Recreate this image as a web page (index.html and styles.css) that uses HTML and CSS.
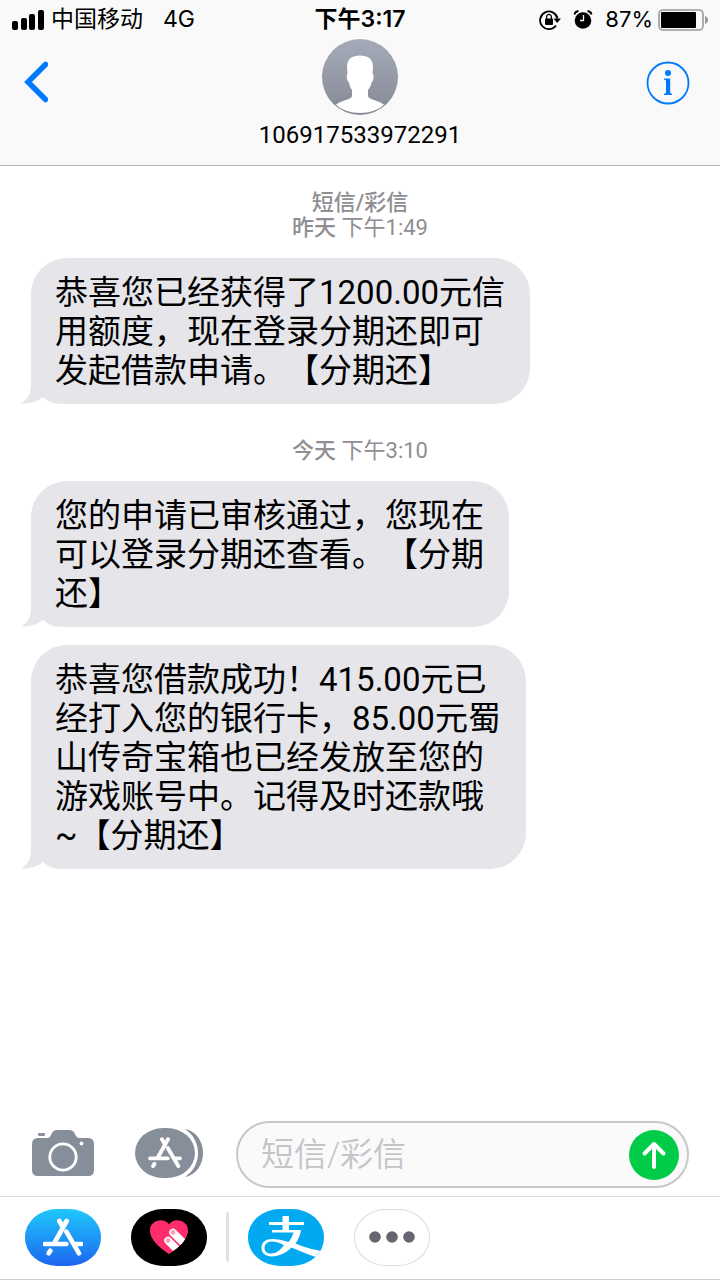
FILE: index.html
```html
<!DOCTYPE html>
<html lang="zh-CN">
  <head>
    <meta charset="UTF-8" />
    <meta name="viewport" content="width=device-width, initial-scale=1.0" />
    <title>短信</title>
    <link rel="stylesheet" href="styles.css">
  </head>
  <body>
    <svg class="defs" aria-hidden="true">
      <symbol id="tail" viewBox="0 0 40 36">
        <path d="M10 0V16C10 26 7 31 0 35.500C9 36 17 33 22 29C28 34 34 36 40 36V0Z" />
      </symbol>
      <symbol id="appstore" viewBox="0 0 120 112">
        <path d="M71 8L33 76M22 97L17 105M49 8L58 24M70 40L108 105M6 77H70M92 77H114" fill="none" stroke="#fff" stroke-width="14" stroke-linecap="round" />
      </symbol>
    </svg>

    <header class="header">
      <div class="status">
        <div class="status-left">
          <svg class="signal" width="32" height="20" viewBox="0 0 32 20">
            <rect x="0" y="11" width="6" height="9" rx="2" />
            <rect x="9" y="8" width="6" height="12" rx="2" />
            <rect x="17" y="4" width="6" height="16" rx="2" />
            <rect x="26" y="0" width="6" height="20" rx="2" />
          </svg>
          <span>中国移动</span>
          <span class="network">4G</span>
        </div>
        <div class="status-time">下午3:17</div>
        <div class="status-right">
          <svg class="rotation" width="22" height="20" viewBox="0 0 22 20">
            <path d="M17 15.500A8.800 8.800 0 1 1 18.500 8.500" fill="none" stroke="#000" stroke-width="1.800" />
            <path d="M14.500 8.500H22L18.200 13Z" />
            <rect x="6" y="8.500" width="8" height="6.500" rx="1" />
            <path d="M7.600 9V6.800A2.400 2.400 0 0 1 12.400 6.800V9" fill="none" stroke="#000" stroke-width="1.300" />
          </svg>
          <svg class="alarm" width="20" height="20" viewBox="0 0 20 20">
            <circle cx="10" cy="10.500" r="8.300" />
            <path d="M1.500 4.500Q2 1.500 5.500 1M18.500 4.500Q18 1.500 14.500 1" fill="none" stroke="#000" stroke-width="1.800" />
            <path d="M10.500 5V10.500H7" fill="none" stroke="#f9f9f9" stroke-width="1.300" />
          </svg>
          <span>87%</span>
          <svg class="battery" width="50" height="22" viewBox="0 0 50 22">
            <rect x="1" y="1" width="44" height="20" rx="4" fill="none" stroke="#999" stroke-width="1.600" />
            <rect x="3" y="3" width="35" height="16" rx="1" />
            <path d="M47 7Q50 8 50 11T47 15Z" fill="#999" />
          </svg>
        </div>
      </div>
      <div class="nav">
        <button type="button" class="back" aria-label="返回">
          <svg width="24" height="42" viewBox="0 0 24 42">
            <path d="M21.500 3.500L4 21L21.500 38.500" fill="none" stroke="#007aff" stroke-width="5.500" stroke-linecap="round" stroke-linejoin="miter" />
          </svg>
        </button>
        <div class="contact">
          <svg width="76" height="76" viewBox="0 0 76 76">
            <defs>
              <linearGradient id="avatar" x1="0" y1="0" x2="0" y2="1">
                <stop offset="0" stop-color="#a5abb9" />
                <stop offset="1" stop-color="#858994" />
              </linearGradient>
            </defs>
            <circle cx="38" cy="38" r="38" fill="url(#avatar)" />
            <path d="M38 16.500C46 16.500 51 20 51 28L50.500 35C52.500 36 51.500 42 49.500 43.500C49 47 47.500 49 46 51V57C46 60.500 57 61.500 62 65.500C57 71 47 74 38 74S19 71 14 65.500C19 61.500 30 60.500 30 57V51C28.500 49 27.500 47 27 43.500C25 42 24 36 25.500 35L25 28C25 20 30 16.500 38 16.500Z" fill="#fff" />
          </svg>
          <h1>106917533972291</h1>
        </div>
        <button type="button" class="info" aria-label="详细信息">
          <svg width="44" height="44" viewBox="0 0 44 44">
            <circle cx="22" cy="22" r="20.500" fill="none" stroke="#007aff" stroke-width="1.800" />
            <circle cx="22" cy="12" r="3" fill="#007aff" />
            <path d="M18 17.500H24.200V32L26 33V34H18V33L20 32V19.500L18 18.500Z" fill="#007aff" />
          </svg>
        </button>
      </div>
    </header>

    <main class="messages">
      <p class="stamp"><b>短信/彩信</b><br><b>昨天</b> 下午1:49</p>
      <div class="bubble">
        恭喜您已经获得了1200.00元信<br>用额度，现在登录分期还即可<br>发起借款申请。【分期还】
        <svg class="tail"><use href="#tail" /></svg>
      </div>

      <p class="stamp later"><b>今天</b> 下午3:10</p>
      <div class="bubble">
        您的申请已审核通过，您现在<br>可以登录分期还查看。【分期<br>还】
        <svg class="tail"><use href="#tail" /></svg>
      </div>
      <div class="bubble">
        恭喜您借款成功！415.00元已<br>经打入您的银行卡，85.00元蜀<br>山传奇宝箱也已经发放至您的<br>游戏账号中。记得及时还款哦<br>~【分期还】
        <svg class="tail"><use href="#tail" /></svg>
      </div>
    </main>

    <form class="compose">
      <button type="button" class="tool" aria-label="相机">
        <svg width="62" height="46" viewBox="0 0 62 46">
          <path d="M6 8H16Q18 8 19 5L20 3Q21.500 0 25 0H37Q41 0 42.500 3L44 6Q45 8 47 8H56Q62 8 62 14V40Q62 46 56 46H6Q0 46 0 40V14Q0 8 6 8Z" fill="#868e99" />
          <rect x="6" y="3" width="7" height="3" rx="1" fill="#868e99" />
          <circle cx="31" cy="27" r="13.200" fill="none" stroke="#fff" stroke-width="2.800" />
          <circle cx="49.500" cy="13.500" r="1.900" fill="#fff" />
        </svg>
      </button>
      <button type="button" class="tool apps-toggle" aria-label="应用">
        <svg width="68" height="50" viewBox="0 0 68 50">
          <path d="M50 1C61 3 68 13 68 25S61 47 50 49C59 43 63 34 63 25S59 7 50 1Z" fill="#868e99" />
          <rect x="0" y="0" width="60" height="50" rx="28" ry="25" fill="#868e99" />
          <use href="#appstore" x="13" y="9" width="34" height="31" />
        </svg>
      </button>
      <div class="field">
        <input type="text" placeholder="短信/彩信" aria-label="短信/彩信" />
        <button type="submit" class="send" aria-label="发送">
          <svg width="50" height="50" viewBox="0 0 50 50">
            <circle cx="25" cy="25" r="25" fill="#00cc47" />
            <path d="M25 37V14M15.500 23.500L25 14L34.500 23.500" fill="none" stroke="#fff" stroke-width="4" stroke-linecap="round" stroke-linejoin="round" />
          </svg>
        </button>
      </div>
    </form>

    <nav class="drawer">
      <button type="button" class="app app-store" aria-label="App Store">
        <svg width="40" height="38"><use href="#appstore" /></svg>
      </button>
      <button type="button" class="app digital-touch" aria-label="Digital Touch">
        <svg width="40" height="36" viewBox="0 0 40 36">
          <clipPath id="heart">
            <path d="M20 35C14 31 1 22 1 11.500C1 1 15 -2 20 5.500C25 -2 39 1 39 11.500C39 22 26 31 20 35Z" />
          </clipPath>
          <path d="M20 35C14 31 1 22 1 11.500C1 1 15 -2 20 5.500C25 -2 39 1 39 11.500C39 22 26 31 20 35Z" fill="#ff2d6b" />
          <path d="M19 21.500L27 29.500M24 13.500L34 23.500" clip-path="url(#heart)" stroke="#fff" stroke-width="7.500" stroke-linecap="round" />
          <circle cx="19" cy="21.500" r="2.400" fill="#ff9db8" />
          <circle cx="24" cy="13.500" r="2.400" fill="#ff9db8" />
        </svg>
      </button>
      <span class="divider"></span>
      <button type="button" class="app alipay" aria-label="支付宝">
        <svg width="76" height="57" viewBox="0 0 76 57">
          <path d="M34.500 7H41V13H56V16H41V21H53C52 27 50 31 47.500 34.500C54 37.500 64 40.500 73 42L68 48C60 45.500 51 41.500 43.500 38.500C38 44 31 47.500 24 47.500C17 47.500 13.500 43.500 13.500 39C13.500 33 18 30 24 30C29.500 30 34 31 40.500 33C43 30 44.500 27 45.500 23.500H24V21H34.500V16H21V13H34.500ZM36 36C31 33.500 27 32.500 23.500 32.500C19 32.500 16.500 35.500 16.500 39C16.500 42.500 19 44.500 23 44.500C28 44.500 32.500 41 36 36Z" fill="#fff" fill-rule="evenodd" />
        </svg>
      </button>
      <button type="button" class="app more" aria-label="更多">
        <svg width="46" height="12" viewBox="0 0 46 12">
          <circle cx="6" cy="6" r="5.800" />
          <circle cx="23" cy="6" r="5.800" />
          <circle cx="40" cy="6" r="5.800" />
        </svg>
      </button>
    </nav>
  </body>
</html>
```

FILE: styles.css
```css
* {
  box-sizing: border-box;
}

body {
  margin: 0;
  min-height: 100vh;
  display: flex;
  flex-direction: column;
  background: #fff;
  color: #000;
  font-family: Roboto, "Noto Sans CJK SC", sans-serif;
  text-spacing-trim: space-all;
}

button {
  display: flex;
  padding: 0;
  border: none;
  background: none;
  cursor: pointer;
}

svg {
  display: block;
}

.defs {
  position: absolute;
  width: 0;
  height: 0;
}

/* header */
.header {
  background: #f9f9f9;
  border-bottom: 1px solid #b2b2b2;
}

.status {
  display: grid;
  grid-template-columns: 1fr auto 1fr;
  align-items: center;
  height: 39px;
  padding: 0 12px;
  font-family: Inter, "Noto Sans CJK SC", sans-serif;
  font-size: 23px;
  line-height: 39px;
}

.status-left,
.status-right {
  display: flex;
  align-items: center;
}

.signal {
  margin-right: 7px;
}

.network {
  margin-left: 20px;
}

.status-time {
  font-weight: 600;
}

.status-right {
  justify-content: flex-end;
  font-size: 22px;
}

.alarm {
  margin: 0 12px;
}

.battery {
  margin-left: 5px;
}

.nav {
  display: grid;
  grid-template-columns: 1fr auto 1fr;
  align-items: start;
  padding: 0 30px 14px;
}

.back,
.info {
  margin-top: 22px;
}

.back {
  margin-left: -6px;
}

.info {
  justify-self: end;
}

.contact {
  display: flex;
  flex-direction: column;
  align-items: center;
}

h1 {
  margin: 4px 0 0;
  font-size: 24px;
  font-weight: 400;
  line-height: 32px;
}

/* conversation */
.messages {
  flex: 1;
  padding: 24px 31px;
}

.stamp {
  margin: 0 0 18px;
  color: #8e8e93;
  font-size: 22px;
  line-height: 25px;
  text-align: center;
}

.stamp b {
  font-weight: 500;
}

.later {
  margin-top: 34px;
}

.bubble {
  position: relative;
  isolation: isolate;
  width: fit-content;
  max-width: 100%;
  margin-bottom: 18px;
  padding: 15px 25px 14px 24px;
  border-radius: 36px;
  background: #e5e5ea;
  font-size: 33px;
  line-height: 39px;
}

.tail {
  position: absolute;
  z-index: -1;
  left: -10px;
  bottom: 0;
  width: 40px;
  height: 36px;
  fill: #e5e5ea;
}

/* compose bar */
.compose {
  display: flex;
  align-items: center;
  padding: 8px 31px 8px 32px;
}

.tool {
  margin-bottom: 4px;
}

.apps-toggle {
  margin-right: 33px;
  margin-left: 41px;
}

.field {
  flex: 1;
  display: flex;
  align-items: center;
  min-width: 0;
  height: 67px;
  padding: 0 8px 0 23px;
  border: 2px solid #c7c7cc;
  border-radius: 34px;
  background: #fafafa;
}

.field input {
  flex: 1;
  min-width: 0;
  padding: 0;
  border: none;
  outline: none;
  background: none;
  font-family: inherit;
  font-size: 33px;
  font-weight: 350;
}

.field input::placeholder {
  color: #c4c4c9;
}

/* app drawer */
.drawer {
  display: flex;
  align-items: center;
  height: 84px;
  padding: 0 25px 2px;
  border-top: 1px solid #dcdcde;
  border-bottom: 1px solid #cfcfd1;
}

.app {
  align-items: center;
  justify-content: center;
  width: 76px;
  height: 57px;
  border-radius: 32px / 28px;
  overflow: hidden;
}

.app-store {
  margin-right: 30px;
  background: linear-gradient(#1ec8fb, #1d66f0);
}

.digital-touch {
  background: #000;
}

.divider {
  width: 3px;
  height: 50px;
  margin: 0 19px;
  border-radius: 2px;
  background: #e1e1e8;
}

.alipay {
  margin-right: 30px;
  background: #00a9f0;
}

.more {
  border: 1px solid #dcdce0;
  fill: #666671;
}
```
